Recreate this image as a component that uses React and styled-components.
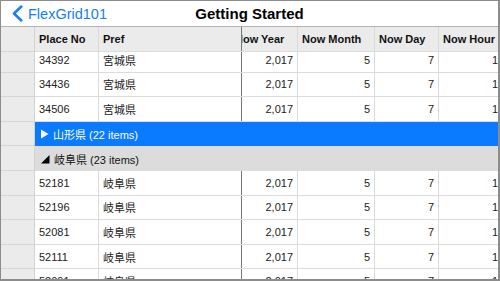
import styled, { createGlobalStyle } from 'styled-components';

const GlobalStyle = createGlobalStyle`
	body {
		margin: 0;
		font-family: "Liberation Sans", "Noto Sans CJK JP", sans-serif;
		background: #ffffff;
	}
`;

const Frame = styled.div`
	width: 500px;
	height: 281px;
	box-sizing: border-box;
	border: 1px solid #8c8c8c;
	border-right-width: 2px;
	border-bottom-width: 2px;
	display: flex;
	flex-direction: column;
	overflow: hidden;
	background: #fff;
`;

const NavBar = styled.div`
	height: 26px;
	flex: none;
	box-sizing: border-box;
	border-bottom: 1px solid #b2b2b2;
	display: grid;
	grid-template-columns: 1fr auto 1fr;
	align-items: center;
`;

const BackButton = styled.div`
	display: flex;
	align-items: center;
	gap: 5px;
	padding-left: 11px;
	color: #147efb;
	font-size: 14.5px;
`;

const Title = styled.div`
	font-size: 15px;
	font-weight: bold;
	color: #000;
`;

const Grid = styled.div`
	flex: 1;
	display: flex;
	flex-direction: column;
	overflow: hidden;
	font-size: 11px;
	color: #222;
`;

const Body = styled.div`
	flex: 1;
	overflow: hidden;
`;

const BodyInner = styled.div`
	margin-top: -4px;
`;

const Row = styled.div`
	display: flex;
	height: ${({ $header }) => ($header ? '25px' : '24.6px')};
	box-sizing: border-box;
	border-bottom: 1px solid #dcdcdc;
	background: ${({ $header }) => ($header ? '#ebebeb' : '#fff')};
	font-weight: ${({ $header }) => ($header ? 'bold' : 'normal')};
	color: ${({ $header }) => ($header ? '#111' : '#222')};
`;

const RowHead = styled.div`
	width: 34px;
	flex: none;
	box-sizing: border-box;
	background: #ebebeb;
	border-right: 1px solid #d2d2d2;
	margin-bottom: -1px;
	border-bottom: 1px solid #d6d6d6;
`;

const Cell = styled.div`
	width: ${({ $w }) => $w}px;
	flex: none;
	box-sizing: border-box;
	display: flex;
	align-items: center;
	justify-content: ${({ $right }) => ($right ? 'flex-end' : 'flex-start')};
	padding: 0 4px;
	border-right: 1px solid ${({ $edge }) => ($edge ? '#777' : '#dadada')};
	white-space: nowrap;
	overflow: hidden;
`;

const Scroller = styled.div`
	flex: 1;
	overflow: hidden;
	display: flex;
`;

const ScrollInner = styled.div`
	display: flex;
	margin-left: -11px;
`;

const GroupCell = styled.div`
	flex: 1;
	display: flex;
	align-items: center;
	gap: 4px;
	padding-left: 5px;
	background: ${({ $active }) => ($active ? '#0a7aff' : '#dcdcdc')};
	color: ${({ $active }) => ($active ? '#fff' : '#111')};
	margin-bottom: -1px;
`;

const columns = [
	{ key: 'year', label: 'Now Year', w: 67 },
	{ key: 'month', label: 'Now Month', w: 77 },
	{ key: 'day', label: 'Now Day', w: 64 },
	{ key: 'hour', label: 'Now Hour', w: 64 },
];

const rows = [
	{ type: 'data', no: '34392', pref: '宮城県' },
	{ type: 'data', no: '34436', pref: '宮城県' },
	{ type: 'data', no: '34506', pref: '宮城県' },
	{ type: 'group', label: '山形県 (22 items)', collapsed: true, active: true },
	{ type: 'group', label: '岐阜県 (23 items)', collapsed: false },
	{ type: 'data', no: '52181', pref: '岐阜県' },
	{ type: 'data', no: '52196', pref: '岐阜県' },
	{ type: 'data', no: '52081', pref: '岐阜県' },
	{ type: 'data', no: '52111', pref: '岐阜県' },
	{ type: 'data', no: '52091', pref: '岐阜県' },
];

const values = { year: '2,017', month: '5', day: '7', hour: '1' };

function Chevron() {
	return (
		<svg width="11" height="17" viewBox="0 0 11 17">
			<polyline points="9.3,1.5 2,8.5 9.3,15.5" fill="none" stroke="#147efb" strokeWidth="2.5" strokeLinecap="round" strokeLinejoin="round" />
		</svg>
	);
}

function GroupIcon({ collapsed, active }) {
	const color = active ? '#fff' : '#000';
	return collapsed ? (
		<svg width="9" height="10" viewBox="0 0 9 10">
			<polygon points="1,0.5 8.5,5 1,9.5" fill={color} />
		</svg>
	) : (
		<svg width="10" height="10" viewBox="0 0 10 10">
			<polygon points="9.5,1 9.5,9.5 1,9.5" fill={color} />
		</svg>
	);
}

export default function App() {
	return (
		<>
			<GlobalStyle />
			<Frame>
				<NavBar>
					<BackButton>
						<Chevron />
						<span>FlexGrid101</span>
					</BackButton>
					<Title>Getting Started</Title>
					<div />
				</NavBar>
				<Grid>
					<Row $header>
						<RowHead />
						<Cell $w={64}>Place No</Cell>
						<Cell $w={143} $edge>Pref</Cell>
						<Scroller>
							<ScrollInner>
								{columns.map((c) => (
									<Cell key={c.key} $w={c.w}>{c.label}</Cell>
								))}
							</ScrollInner>
						</Scroller>
					</Row>
					<Body>
						<BodyInner>
							{rows.map((r, i) =>
								r.type === 'group' ? (
									<Row key={i}>
										<RowHead />
										<GroupCell $active={r.active}>
											<GroupIcon collapsed={r.collapsed} active={r.active} />
											<span>{r.label}</span>
										</GroupCell>
									</Row>
								) : (
									<Row key={i}>
										<RowHead />
										<Cell $w={64}>{r.no}</Cell>
										<Cell $w={143} $edge>{r.pref}</Cell>
										<Scroller>
											<ScrollInner>
												{columns.map((c) => (
													<Cell key={c.key} $w={c.w} $right>{values[c.key]}</Cell>
												))}
											</ScrollInner>
										</Scroller>
									</Row>
								)
							)}
						</BodyInner>
					</Body>
				</Grid>
			</Frame>
		</>
	);
}
